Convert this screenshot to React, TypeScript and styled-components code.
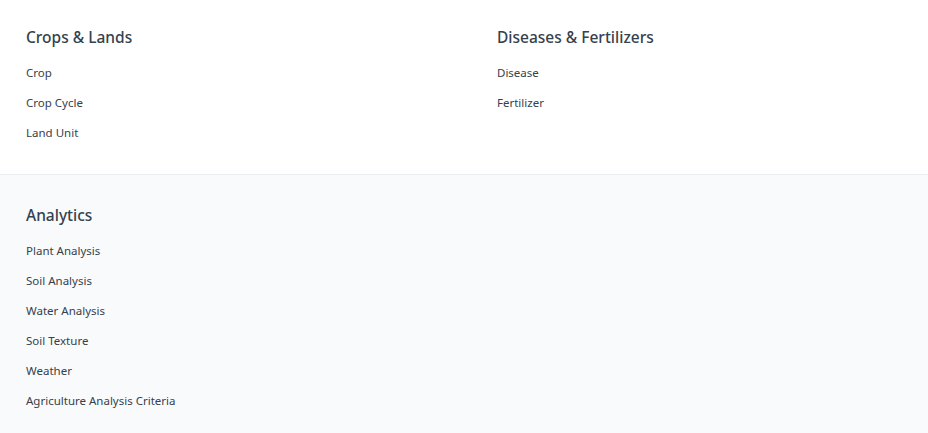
import React from "react";
import styled, { createGlobalStyle } from "styled-components";

const Global = createGlobalStyle`
  html, body { margin: 0; padding: 0; background: #ffffff; }
  body { font-family: "Noto Sans", "Open Sans", sans-serif; -webkit-font-smoothing: antialiased; }
`;

const Section = styled.section<{ $shade?: boolean }>`
  background: ${(p) => (p.$shade ? "#f9fafb" : "#ffffff")};
  border-top: ${(p) => (p.$shade ? "1px solid #ebeef0" : "none")};
  padding: ${(p) => (p.$shade ? "30px 26px 17px" : "27px 26px 26px")};
`;

const Grid = styled.div`
  display: grid;
  grid-template-columns: 1fr 1fr;
  column-gap: 66px;
`;

const Heading = styled.h3`
  margin: 0 0 11px;
  font-size: 15.5px;
  line-height: 20px;
  font-weight: 500;
  color: #36414c;
`;

const List = styled.ul`
  list-style: none;
  margin: 0;
  padding: 0;
`;

const Item = styled.li`
  font-size: 11.5px;
  line-height: 30px;
  color: #36414c;
  cursor: pointer;
`;

type Group = { title: string; items: string[] };

const Card = ({ g }: { g: Group }) => (
  <div>
    <Heading>{g.title}</Heading>
    <List>
      {g.items.map((i) => (
        <Item key={i}>{i}</Item>
      ))}
    </List>
  </div>
);

const top: Group[] = [
  { title: "Crops & Lands", items: ["Crop", "Crop Cycle", "Land Unit"] },
  { title: "Diseases & Fertilizers", items: ["Disease", "Fertilizer"] },
];

const analytics: Group = {
  title: "Analytics",
  items: [
    "Plant Analysis",
    "Soil Analysis",
    "Water Analysis",
    "Soil Texture",
    "Weather",
    "Agriculture Analysis Criteria",
  ],
};

export default function App() {
  return (
    <>
      <Global />
      <Section>
        <Grid>
          {top.map((g) => (
            <Card key={g.title} g={g} />
          ))}
        </Grid>
      </Section>
      <Section $shade>
        <Grid>
          <Card g={analytics} />
        </Grid>
      </Section>
    </>
  );
}
